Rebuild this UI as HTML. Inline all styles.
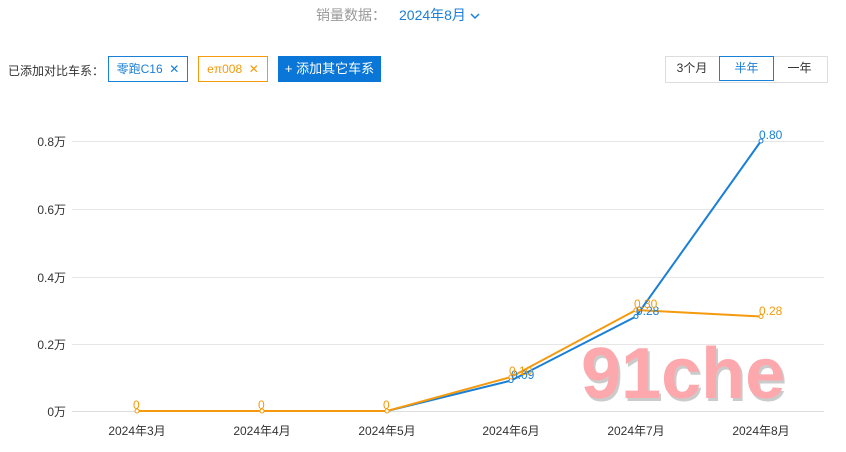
<!DOCTYPE html>
<html><head><meta charset="utf-8"><style>
body{margin:0;width:846px;height:452px;background:#fff;font-family:"Liberation Sans","Noto Sans CJK SC",sans-serif;overflow:hidden;position:relative}
.a{position:absolute;font-size:12px}
</style></head><body>
<div class="a" style="left:316px;top:5px;font-size:14px;color:#999">销量数据：</div>
<div class="a" style="left:399px;top:5px;font-size:14px;color:#1a7fd6">2024年8月 <svg width="10" height="8" viewBox="0 0 10 8"><path d="M1 2l4 4 4-4" fill="none" stroke="#1a7fd6" stroke-width="1.5"/></svg></div>
<div class="a" style="left:8px;top:62px;color:#333">已添加对比车系：</div>
<div class="a" style="left:108px;top:56px;width:78px;height:24px;border:1px solid #1a7fd6;color:#1a7fd6;line-height:24px;text-align:center">零跑C16 &nbsp;✕</div>
<div class="a" style="left:198px;top:56px;width:68px;height:24px;border:1px solid #f59a0c;color:#f59a0c;line-height:24px;text-align:center">eπ008 &nbsp;✕</div>
<div class="a" style="left:278px;top:56px;width:103px;height:26px;background:#0a77d8;color:#fff;line-height:26px;text-align:center;font-size:13px">+ 添加其它车系</div>
<div class="a" style="left:665px;top:56px;width:161px;height:25px;border:1px solid #ddd;"></div>
<div class="a" style="left:665px;top:56px;width:54px;height:25px;line-height:25px;text-align:center;color:#333">3个月</div>
<div class="a" style="left:719px;top:56px;width:53px;height:23px;line-height:23px;text-align:center;color:#1a7fd6;border:1px solid #1a7fd6">半年</div>
<div class="a" style="left:773px;top:56px;width:53px;height:25px;line-height:25px;text-align:center;color:#333">一年</div>
<svg class="a" style="left:0;top:0" width="846" height="452">
<g stroke="#e6e6e6" stroke-width="1"><line x1="72" x2="824" y1="141.5" y2="141.5"/><line x1="72" x2="824" y1="209.5" y2="209.5"/><line x1="72" x2="824" y1="277.5" y2="277.5"/><line x1="72" x2="824" y1="344.5" y2="344.5"/><line x1="72" x2="824" y1="411.5" y2="411.5" stroke="#ddd"/></g>
<g font-size="12" fill="#333" text-anchor="end" font-family="Liberation Sans,Noto Sans CJK SC,sans-serif"><text x="66" y="146">0.8万</text><text x="66" y="214">0.6万</text><text x="66" y="282">0.4万</text><text x="66" y="349">0.2万</text><text x="66" y="416">0万</text></g>
<g font-size="12" fill="#333" text-anchor="middle" font-family="Liberation Sans,Noto Sans CJK SC,sans-serif"><text x="137" y="435">2024年3月</text><text x="262" y="435">2024年4月</text><text x="387" y="435">2024年5月</text><text x="511" y="435">2024年6月</text><text x="636" y="435">2024年7月</text><text x="761" y="435">2024年8月</text></g>
<text x="583" y="401" font-size="72" font-weight="bold" fill="#999" opacity="0.5" font-family="Liberation Sans,sans-serif">91che</text>
<text x="581" y="398" font-size="72" font-weight="bold" fill="#fca8ac" font-family="Liberation Sans,sans-serif">91che</text>
<polyline points="137,411 262,411 387,411 511,380.6 636,316.5 761,141" fill="none" stroke="#1a7fd6" stroke-width="2"/>
<polyline points="137,411 262,411 387,411 511,377 636,310 761,316.5" fill="none" stroke="#f59a0c" stroke-width="2"/>
<g fill="#fff" stroke-width="1"><g stroke="#1a7fd6"><circle cx="511" cy="380.6" r="2"/><circle cx="636" cy="316.5" r="2"/><circle cx="761" cy="141" r="2"/></g><g stroke="#f59a0c"><circle cx="137" cy="411" r="2"/><circle cx="262" cy="411" r="2"/><circle cx="387" cy="411" r="2"/><circle cx="511" cy="377" r="2"/><circle cx="636" cy="310" r="2"/><circle cx="761" cy="316.5" r="2"/></g></g>
<g font-size="12" font-family="Liberation Sans,sans-serif"><g fill="#1a7fd6"><text x="511" y="379">0.09</text><text x="636" y="315">0.28</text><text x="759" y="139">0.80</text></g><g fill="#f59a0c"><text x="133" y="409">0</text><text x="258" y="409">0</text><text x="383" y="409">0</text><text x="509" y="375">0.10</text><text x="634" y="308">0.30</text><text x="759" y="315">0.28</text></g></g>
</svg>
</body></html>
